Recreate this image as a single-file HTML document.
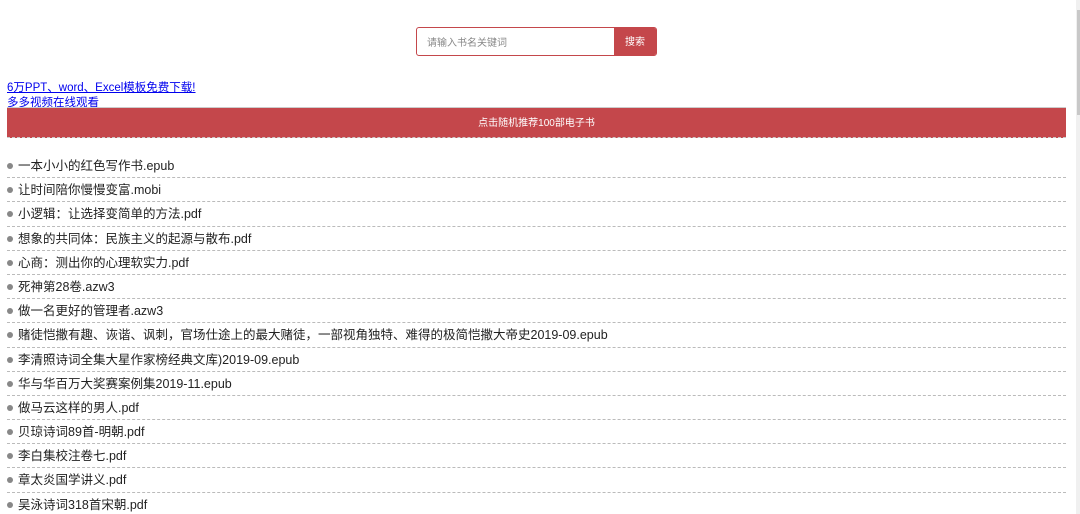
<!DOCTYPE html>
<html><head><meta charset="utf-8"><style>
html,body{margin:0;padding:0;background:#fff;overflow:hidden;width:1080px;height:514px}
body{font-family:"Liberation Sans","Noto Sans CJK SC",sans-serif;position:relative}
.search{position:absolute;left:416px;top:27px;width:241px;height:29px;border:1px solid #c4474b;border-radius:3px;box-sizing:border-box;overflow:hidden}
.search .in{position:absolute;left:10px;top:6px;font-size:10px;color:#888}
.search .btn{position:absolute;right:0;top:0;width:42px;height:29px;background:#c4474b;color:#fff;font-size:10px;text-align:center;line-height:29px}
a{color:#00e;text-decoration:underline;font-size:11.5px;position:absolute;left:7px}
.bar{position:absolute;left:7px;top:107px;width:1059px;height:31px;background:#c4474b;border-top:1px solid #ccc;border-bottom:1px dashed #ccc;box-sizing:border-box;color:#fff;font-size:10px;text-align:center;line-height:31px}
ul{position:absolute;left:7px;top:154px;width:1059px;margin:0;padding:0;list-style:none}
li{height:23.2px;border-bottom:1px dashed #bbb;font-size:12.5px;color:#222;line-height:24px;padding-left:11px;position:relative}
li:before{content:"";position:absolute;left:0;top:9px;width:6px;height:6px;border-radius:50%;background:#888}
.sb{position:absolute;right:0;top:0;width:4px;height:514px;background:#f0f0f0}
.sb div{position:absolute;left:1px;top:10px;width:3px;height:105px;background:#c8c8c8}
</style></head><body>
<div class="search"><span class="in">请输入书名关键词</span><div class="btn">搜索</div></div>
<a style="top:79px">6万PPT、word、Excel模板免费下载!</a>
<a style="top:94px">多多视频在线观看</a>
<div class="bar">点击随机推荐100部电子书</div>
<ul>
<li>一本小小的红色写作书.epub</li>
<li>让时间陪你慢慢变富.mobi</li>
<li>小逻辑：让选择变简单的方法.pdf</li>
<li>想象的共同体：民族主义的起源与散布.pdf</li>
<li>心商：测出你的心理软实力.pdf</li>
<li>死神第28卷.azw3</li>
<li>做一名更好的管理者.azw3</li>
<li>赌徒恺撒有趣、诙谐、讽刺，官场仕途上的最大赌徒，一部视角独特、难得的极简恺撒大帝史2019-09.epub</li>
<li>李清照诗词全集大星作家榜经典文库)2019-09.epub</li>
<li>华与华百万大奖赛案例集2019-11.epub</li>
<li>做马云这样的男人.pdf</li>
<li>贝琼诗词89首-明朝.pdf</li>
<li>李白集校注卷七.pdf</li>
<li>章太炎国学讲义.pdf</li>
<li>吴泳诗词318首宋朝.pdf</li>
</ul>
<div class="sb"><div></div></div>
</body></html>
